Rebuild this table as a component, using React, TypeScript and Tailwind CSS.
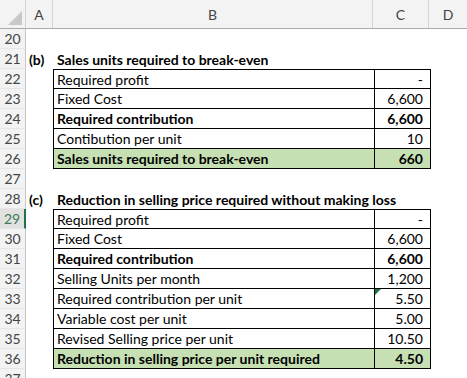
import React from 'react';

type Row = {
  n: number;
  a?: string;
  b?: string;
  c?: string;
  kind?: 'blank' | 'title' | 'cell' | 'bold' | 'total';
  first?: boolean;
  flag?: boolean;
};

const rows: Row[] = [
  { n: 20, kind: 'blank' },
  { n: 21, kind: 'title', a: '(b)', b: 'Sales units required to break-even' },
  { n: 22, kind: 'cell', b: 'Required profit', c: '-', first: true },
  { n: 23, kind: 'cell', b: 'Fixed Cost', c: '6,600' },
  { n: 24, kind: 'bold', b: 'Required contribution', c: '6,600' },
  { n: 25, kind: 'cell', b: 'Contibution per unit', c: '10' },
  { n: 26, kind: 'total', b: 'Sales units required to break-even', c: '660' },
  { n: 27, kind: 'blank' },
  { n: 28, kind: 'title', a: '(c)', b: 'Reduction in selling price required without making loss' },
  { n: 29, kind: 'cell', b: 'Required profit', c: '-', first: true },
  { n: 30, kind: 'cell', b: 'Fixed Cost', c: '6,600' },
  { n: 31, kind: 'bold', b: 'Required contribution', c: '6,600' },
  { n: 32, kind: 'cell', b: 'Selling Units per month', c: '1,200' },
  { n: 33, kind: 'cell', b: 'Required contribution per unit', c: '5.50', flag: true },
  { n: 34, kind: 'cell', b: 'Variable cost per unit', c: '5.00' },
  { n: 35, kind: 'cell', b: 'Revised Selling price per unit', c: '10.50' },
  { n: 36, kind: 'total', b: 'Reduction in selling price per unit required', c: '4.50' },
  { n: 37, kind: 'blank' },
];

const font = { fontFamily: 'Lato, "Open Sans", sans-serif' };

function SheetRow({ row }: { row: Row }) {
  const selected = row.n === 29;
  const boxed = row.kind === 'cell' || row.kind === 'bold' || row.kind === 'total';
  const fill = row.kind === 'total' ? 'bg-[#c6e0b4]' : 'bg-white';
  const weight = row.kind === 'bold' || row.kind === 'total' ? 'font-bold' : 'font-normal';
  return (
    <div className="flex h-[20px] shrink-0">
      <div
        className={`w-[26px] shrink-0 flex items-center justify-center text-[14px] border-b border-[#e6e6e6] ${
          selected
            ? 'bg-[#e1e1e1] text-[#3f7a57] border-r-2 border-r-[#217346]'
            : 'bg-[#f3f3f3] text-[#444] border-r border-r-[#c6c6c6]'
        }`}
      >
        {row.n}
      </div>
      <div className="w-[27px] shrink-0 flex items-center pl-[3px] text-[14px] font-bold text-black">
        {row.a}
      </div>
      {row.kind === 'title' && (
        <div className="flex-1 flex items-center pl-[4px] text-[14px] font-bold text-black whitespace-nowrap">
          {row.b}
        </div>
      )}
      {boxed && (
        <>
          <div
            className={`w-[321px] shrink-0 flex items-center pl-[3px] text-[14px] text-black border-l border-b border-black ${fill} ${weight} ${
              row.first ? 'border-t' : ''
            }`}
          >
            {row.b}
          </div>
          <div
            className={`relative w-[57px] shrink-0 flex items-center justify-end pr-[7px] text-[14px] text-black border-l border-r border-b border-black ${fill} ${weight} ${
              row.first ? 'border-t' : ''
            }`}
          >
            {row.flag && (
              <span className="absolute left-0 top-0 w-0 h-0 border-t-[6px] border-t-[#217346] border-r-[6px] border-r-transparent" />
            )}
            {row.c}
          </div>
        </>
      )}
    </div>
  );
}

export default function App() {
  return (
    <div className="w-[467px] h-[378px] overflow-hidden bg-white flex flex-col" style={font}>
      <div className="flex h-[29px] shrink-0 bg-[#f3f3f3] border-b border-[#ababab] text-[14px] text-[#444]">
        <div className="w-[26px] shrink-0 relative border-r border-[#d4d4d4]">
          <span className="absolute right-[3px] bottom-[3px] w-0 h-0 border-l-[14px] border-l-transparent border-b-[14px] border-b-[#c8c8c8]" />
        </div>
        <div className="w-[27px] shrink-0 flex items-center justify-center border-r border-[#d4d4d4]">A</div>
        <div className="w-[320px] shrink-0 flex items-center justify-center border-r border-[#d4d4d4]">B</div>
        <div className="w-[56px] shrink-0 flex items-center justify-center border-r border-[#d4d4d4]">C</div>
        <div className="flex-1 flex items-center justify-center">D</div>
      </div>
      {rows.map((r) => (
        <SheetRow key={r.n} row={r} />
      ))}
    </div>
  );
}
